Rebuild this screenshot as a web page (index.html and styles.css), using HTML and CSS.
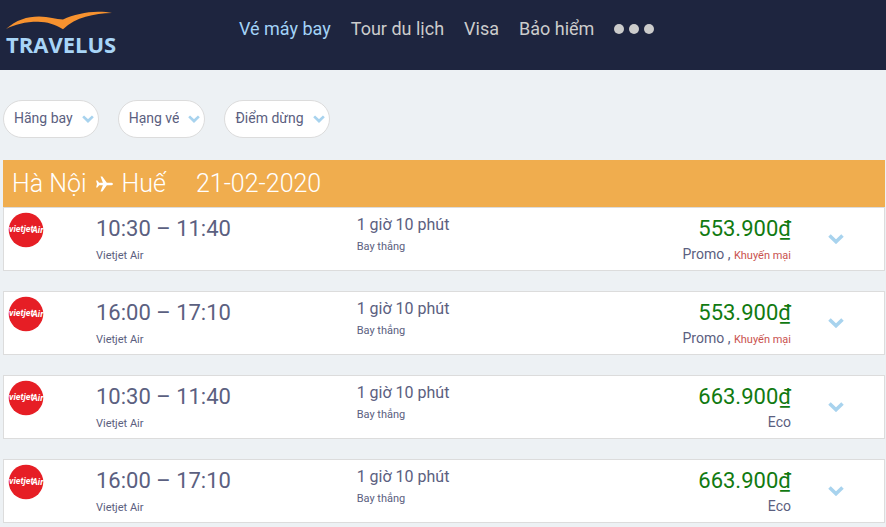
FILE: index.html
```html
<!DOCTYPE html>
<html lang="vi">
<head>
    <meta charset="UTF-8">
    <meta name="viewport" content="width=device-width, initial-scale=1.0">
    <title>Travelus - Vé máy bay</title>
    <link rel="stylesheet" href="styles.css">
</head>
<body>

<!-- Shared icons -->
<svg class="icon-defs" aria-hidden="true">
    <symbol id="icon-chevron" viewBox="0 0 16 10">
        <path d="M1.5 1.5 L8 7.7 L14.5 1.5" fill="none" stroke="currentColor" stroke-width="3.6"/>
    </symbol>
    <symbol id="icon-vietjet" viewBox="0 0 36 36">
        <circle cx="18" cy="18" r="17.3" fill="#e61e25"/>
        <g fill="#fff" font-family="Roboto, sans-serif" font-style="italic" font-weight="700" font-size="9">
            <text x="1" y="20">vietjet</text>
            <text x="24" y="21">Air</text>
        </g>
    </symbol>
</svg>

<header class="header">
    <a class="logo" href="#">
        <svg class="logo-bird" viewBox="0 0 108 20" aria-hidden="true">
            <path d="M0 18 C10 9 21 5.5 33 5.5 C43 5.5 50 8.5 57 8.5 C67 4 80 0.8 92 0.8 C98 0.8 102 1.2 106 2 C88 2.5 70 6 57 18.2 C49 13.5 41 10.8 32 10.8 C19 10.8 9 13.5 0 18 Z" fill="#f7922f"/>
        </svg>
        <span class="logo-text">TRAVELUS</span>
    </a>
    <nav class="nav">
        <a class="nav-link active" href="#">Vé máy bay</a>
        <a class="nav-link" href="#">Tour du lịch</a>
        <a class="nav-link" href="#">Visa</a>
        <a class="nav-link" href="#">Bảo hiểm</a>
        <button class="nav-more" type="button" aria-label="Xem thêm">
            <span class="dot"></span>
            <span class="dot"></span>
            <span class="dot"></span>
        </button>
    </nav>
</header>

<main class="content">
    <form class="filters">
        <div class="filter">
            <select class="filter-select" aria-label="Hãng bay">
                <option>Hãng bay</option>
                <option>Vietjet Air</option>
            </select>
            <svg class="filter-icon" aria-hidden="true"><use href="#icon-chevron"/></svg>
        </div>
        <div class="filter">
            <select class="filter-select" aria-label="Hạng vé">
                <option>Hạng vé</option>
                <option>Promo</option>
                <option>Eco</option>
            </select>
            <svg class="filter-icon" aria-hidden="true"><use href="#icon-chevron"/></svg>
        </div>
        <div class="filter">
            <select class="filter-select" aria-label="Điểm dừng">
                <option>Điểm dừng</option>
                <option>Bay thẳng</option>
            </select>
            <svg class="filter-icon" aria-hidden="true"><use href="#icon-chevron"/></svg>
        </div>
    </form>

    <h1 class="route">
        <span>Hà Nội</span>
        <svg class="route-plane" viewBox="0 0 18 18" aria-label="đến">
            <path d="M17.5 9 C17.5 8.1 16.4 7.7 15 7.7 H11.3 L6.8 1.5 H5 L7.4 7.7 H3.6 L1.9 5.6 H0.6 L1.5 9 L0.6 12.4 H1.9 L3.6 10.3 H7.4 L5 16.5 H6.8 L11.3 10.3 H15 C16.4 10.3 17.5 9.9 17.5 9 Z" fill="currentColor"/>
        </svg>
        <span>Huế</span>
        <span class="route-date">21-02-2020</span>
    </h1>

    <div class="flights">
        <article class="flight">
            <svg class="airline-logo" role="img" aria-label="Vietjet Air"><use href="#icon-vietjet"/></svg>
            <div class="flight-time">
                <div class="time">10:30 – 11:40</div>
                <div class="small">Vietjet Air</div>
            </div>
            <div class="flight-duration">
                <div class="duration">1 giờ 10 phút</div>
                <div class="small">Bay thẳng</div>
            </div>
            <div class="flight-price">
                <div class="price">553.900₫</div>
                <div class="fare">Promo , <span class="sale">Khuyến mại</span></div>
            </div>
            <button class="btn-detail" type="button" aria-label="Chi tiết">
                <svg class="detail-icon" aria-hidden="true"><use href="#icon-chevron"/></svg>
            </button>
        </article>

        <article class="flight">
            <svg class="airline-logo" role="img" aria-label="Vietjet Air"><use href="#icon-vietjet"/></svg>
            <div class="flight-time">
                <div class="time">16:00 – 17:10</div>
                <div class="small">Vietjet Air</div>
            </div>
            <div class="flight-duration">
                <div class="duration">1 giờ 10 phút</div>
                <div class="small">Bay thẳng</div>
            </div>
            <div class="flight-price">
                <div class="price">553.900₫</div>
                <div class="fare">Promo , <span class="sale">Khuyến mại</span></div>
            </div>
            <button class="btn-detail" type="button" aria-label="Chi tiết">
                <svg class="detail-icon" aria-hidden="true"><use href="#icon-chevron"/></svg>
            </button>
        </article>

        <article class="flight">
            <svg class="airline-logo" role="img" aria-label="Vietjet Air"><use href="#icon-vietjet"/></svg>
            <div class="flight-time">
                <div class="time">10:30 – 11:40</div>
                <div class="small">Vietjet Air</div>
            </div>
            <div class="flight-duration">
                <div class="duration">1 giờ 10 phút</div>
                <div class="small">Bay thẳng</div>
            </div>
            <div class="flight-price">
                <div class="price">663.900₫</div>
                <div class="fare">Eco</div>
            </div>
            <button class="btn-detail" type="button" aria-label="Chi tiết">
                <svg class="detail-icon" aria-hidden="true"><use href="#icon-chevron"/></svg>
            </button>
        </article>

        <article class="flight">
            <svg class="airline-logo" role="img" aria-label="Vietjet Air"><use href="#icon-vietjet"/></svg>
            <div class="flight-time">
                <div class="time">16:00 – 17:10</div>
                <div class="small">Vietjet Air</div>
            </div>
            <div class="flight-duration">
                <div class="duration">1 giờ 10 phút</div>
                <div class="small">Bay thẳng</div>
            </div>
            <div class="flight-price">
                <div class="price">663.900₫</div>
                <div class="fare">Eco</div>
            </div>
            <button class="btn-detail" type="button" aria-label="Chi tiết">
                <svg class="detail-icon" aria-hidden="true"><use href="#icon-chevron"/></svg>
            </button>
        </article>
    </div>
</main>

</body>
</html>
```
FILE: styles.css
```css
* {
    box-sizing: border-box;
}

body {
    margin: 0;
    background-color: #edf1f4;
    color: #5b6080;
    font-family: Roboto, "Liberation Sans", sans-serif;
    font-size: 14px;
}

.icon-defs {
    display: none;
}

/* Header */
.header {
    display: grid;
    grid-template-columns: 239px 1fr;
    align-items: start;
    height: 70px;
    background: #1e253f;
}

.logo {
    display: flex;
    flex-direction: column;
    width: 120px;
    padding: 11px 0 0 6px;
    color: #a8d5f7;
    text-decoration: none;
}

.logo-bird {
    width: 108px;
    height: 20px;
}

.logo-text {
    font-family: "Open Sans", sans-serif;
    font-size: 22px;
    font-weight: 700;
    line-height: 26px;
}

.nav {
    display: flex;
    align-items: center;
    gap: 20px;
    padding-top: 16px;
}

.nav-link {
    color: #ccc;
    font-size: 18px;
    line-height: 26px;
    text-decoration: none;
}

.nav-link.active {
    color: #a3d3f7;
}

.nav-more {
    display: flex;
    gap: 5px;
    padding: 0;
    border: none;
    background: none;
    cursor: pointer;
}

.dot {
    width: 10px;
    height: 10px;
    border-radius: 50%;
    background: #ccc;
}

/* Filters */
.content {
    padding: 30px 1px 4px 3px;
}

.filters {
    display: flex;
    gap: 19px;
    margin-bottom: 22px;
}

.filter {
    position: relative;
}

.filter-select {
    appearance: none;
    field-sizing: content;
    height: 38px;
    padding: 0 25px 2px 10px;
    border: 1px solid #dcdcdc;
    border-radius: 19px;
    background: #fff;
    color: #5b6080;
    font-family: inherit;
    font-size: 14px;
    cursor: pointer;
}

.filter-icon {
    position: absolute;
    top: 15px;
    right: 5px;
    width: 12px;
    height: 8px;
    color: #a8d3ee;
    pointer-events: none;
}

/* Route bar */
.route {
    display: flex;
    align-items: center;
    gap: 8px;
    height: 47px;
    margin: 0;
    padding: 0 9px;
    background: #f0ad4e;
    color: #fff;
    font-size: 25px;
    font-weight: 300;
}

.route-plane {
    width: 19px;
    height: 18px;
}

.route-date {
    margin-left: 22px;
}

/* Flight list */
.flights {
    display: flex;
    flex-direction: column;
    gap: 20px;
}

.flight {
    display: grid;
    grid-template-columns: 92px 3fr 5fr 93px;
    height: 64px;
    border: 1px solid #dcdcdc;
    background: #fff;
}

.airline-logo {
    width: 36px;
    height: 36px;
    margin: 4px 4px;
}

.time,
.price {
    font-size: 22px;
    line-height: 26px;
}

.flight-time,
.flight-price {
    padding-top: 8px;
}

.flight-duration {
    padding-top: 6px;
}

.flight-time .small {
    margin-top: 3px;
}

.flight-duration,
.flight-price {
    grid-row: 1;
}

.flight-duration {
    grid-column: 3;
}

.flight-price {
    grid-column: 3;
    justify-self: end;
    text-align: right;
}

.duration {
    font-size: 16px;
    line-height: 22px;
}

.small {
    font-size: 11px;
    line-height: 21px;
}

.price {
    color: #117a11;
}

.fare {
    line-height: 24px;
}

.sale {
    color: #c9524e;
    font-size: 11px;
}

.btn-detail {
    display: flex;
    align-items: center;
    justify-content: center;
    grid-column: 4;
    padding: 0 4px 0 0;
    border: none;
    background: none;
    color: #a8d3ee;
    cursor: pointer;
}

.detail-icon {
    width: 16px;
    height: 10px;
}
```
